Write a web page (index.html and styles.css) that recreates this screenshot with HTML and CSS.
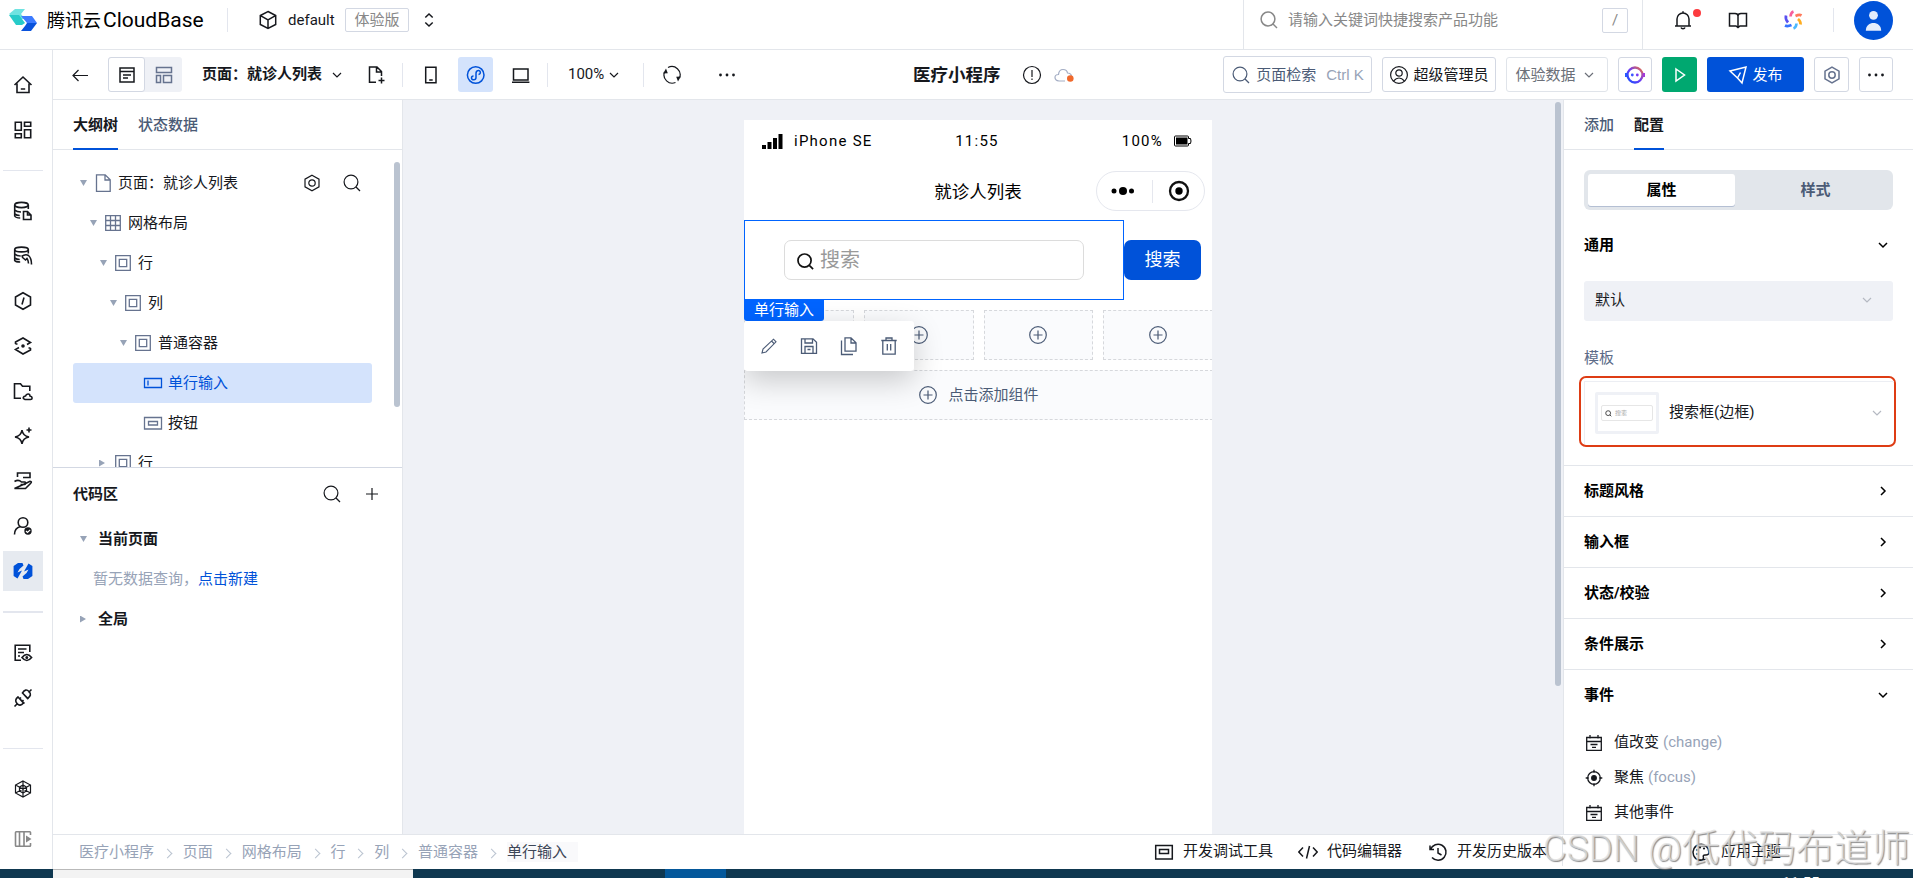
FILE: index.html
```html
<!DOCTYPE html>
<html lang="zh-CN">
<head>
  <meta charset="UTF-8">
  <meta name="viewport" content="width=device-width, initial-scale=1">
  <title>腾讯云CloudBase - 医疗小程序</title>
  <link rel="stylesheet" href="styles.css">
</head>
<body>
<!-- shared icons -->
<svg class="sprite" width="0" height="0">
  <symbol id="i-search" viewBox="0 0 20 20"><circle cx="9" cy="9" r="6.9"/><path d="M14 14l4 4"/></symbol>
  <symbol id="i-down" viewBox="0 0 20 20"><path d="M6 8l4 4 4-4"/></symbol>
  <symbol id="i-right" viewBox="0 0 20 20"><path d="M8 6l4 4-4 4"/></symbol>
  <symbol id="i-gear" viewBox="0 0 20 20"><path d="M10 2.200l7 4v7.600l-7 4-7-4V6.200z"/><circle cx="10" cy="10" r="3.200"/></symbol>
  <symbol id="i-dots" viewBox="0 0 20 20"><g fill="currentColor" stroke="none"><circle cx="3.500" cy="10" r="1.400"/><circle cx="10" cy="10" r="1.400"/><circle cx="16.500" cy="10" r="1.400"/></g></symbol>
  <symbol id="i-box" viewBox="0 0 20 20"><path d="M2.700 2.700h14.600v14.600H2.700zM6.300 6.300h7.400v7.400H6.300z"/></symbol>
  <symbol id="i-plus-circle" viewBox="0 0 20 20"><circle cx="10" cy="10" r="8.300"/><path d="M10 5.500v9M5.500 10h9"/></symbol>
  <symbol id="i-calendar" viewBox="0 0 20 20"><path d="M2.700 4.500h14.600v12.800H2.700zM3 8.500h14M6 2v3.500M14 2v3.500M6.500 11.500h7M8 14.300h4"/></symbol>
</svg>

<header class="header">
  <svg class="logo" viewBox="0 0 28 22"><path d="M6 0h10l-4 5 4 5H6L0 5z" fill="#6fe3e1"/><path d="M0 6h10l6 8-3 2H7z" fill="#27cbc9"/><path d="M12 7h11l5 7H18z" fill="#3d7bff"/><path d="M18 14h10l-6 8H12l4-5z" fill="#0a53dc"/></svg>
  <span class="brand">腾讯云<b>CloudBase</b></span>
  <i class="vline header-line"></i>
  <svg class="icon env-icon" viewBox="0 0 20 20"><path d="M10 1.500l7.700 4v9L10 18.500l-7.700-4v-9zM2.500 5.700L10 10l7.500-4.300M10 10v8.300"/></svg>
  <span class="env-name">default</span>
  <span class="env-tag">体验版</span>
  <svg class="icon env-arrow" viewBox="0 0 20 20"><path d="M6.300 7.500L10 4l3.700 3.500M6.300 12.500L10 16l3.700-3.500"/></svg>
  <div class="header-search">
    <svg class="icon"><use href="#i-search"/></svg>
    <span class="header-placeholder">请输入关键词快捷搜索产品功能</span>
    <kbd>/</kbd>
  </div>
  <div class="header-tools">
    <span class="bell"><svg class="icon" viewBox="0 0 20 20"><path d="M2 16h16M4 16V9a6 6 0 0 1 12 0v7M10 1.200V3M8 17.500c.6 1.700 3.400 1.700 4 0"/></svg><i class="red-dot"></i></span>
    <svg class="icon" viewBox="0 0 20 20"><path d="M10 5v12.500M1.500 3.500H7q3 0 3 2.500 0-2.500 3-2.500h5.500V16H12l-2 1.500L8 16H1.500z"/></svg>
    <svg class="icon" viewBox="0 0 20 20"><g fill="none" stroke-width="2.700"><path d="M7.500 6.500q.3-4 3-5" stroke="#f65f9c"/><path d="M12.500 6q4-1.800 6-.5" stroke="#ff7a5c"/><path d="M15 9q3 2.500 2.500 5.500" stroke="#ffad1f"/><path d="M13.500 13.500q-.3 4-3 5" stroke="#4cb9ff"/><path d="M8.500 15q-4 1.800-6.500.5" stroke="#3673ff"/><path d="M5 12.500Q2 9 3 5.500" stroke="#5a50f0"/></g></svg>
    <i class="vline"></i>
    <svg class="avatar" viewBox="0 0 38 38"><circle cx="19" cy="19" r="19" fill="#0052d9"/><circle cx="19" cy="14" r="4.300" fill="#e4edfc"/><path d="M11.500 29c0-10 15-10 15 0z" fill="#e4edfc"/></svg>
  </div>
</header>

<div class="main">
  <nav class="rail">
    <a class="rail-item"><svg class="icon" viewBox="0 0 20 20"><path d="M1.500 10L10 2l8.500 8M4 8.500v9h12v-9M7.800 14h4.400"/></svg></a>
    <a class="rail-item"><svg class="icon" viewBox="0 0 20 20"><path d="M2.300 2.300h6v8h-6zM11.500 2.300h6.200v4h-6.200zM2.300 13.700h6v4h-6zM11.500 9.700h6.200v8h-6.200z"/></svg></a>
    <i class="hline"></i>
    <a class="rail-item"><svg class="icon" viewBox="0 0 20 20"><ellipse cx="8.500" cy="4" rx="6.800" ry="2.600"/><path d="M1.700 4v11q1 2 5.500 2M15.300 4v4M1.700 9q2 2 6.300 2M1.700 13q2 1.500 5 1.500M10.500 10.500h4l3.500 3.500v4.500h-7.500zM14.500 10.500V14H18"/></svg></a>
    <a class="rail-item"><svg class="icon" viewBox="0 0 20 20"><ellipse cx="8.500" cy="3.500" rx="6.800" ry="2.400"/><path d="M1.700 3.500v11q1 1.500 5.500 1.500M15.300 3.500v4M1.700 8q2 2 6 2M1.700 12q2 1.500 5 1.500M8.500 10.500q4-3 7-1 3 2.500 3 9M9 11l3.500 3 1.500-1.500q1.500 2 1.500 5"/></svg></a>
    <a class="rail-item"><svg class="icon" viewBox="0 0 20 20"><path d="M10 1.700l7.500 4.300v8L10 18.300 2.500 14V6zM11 6.500l-2 7"/></svg></a>
    <a class="rail-item"><svg class="icon" viewBox="0 0 20 20"><path d="M2.500 8V6L10 2l7.500 4.500-3.500 2M17.500 12v2L10 18l-7.500-4.500 3.500-2M2.500 8h2M17.500 12h-2"/><circle cx="10" cy="10" r="1" fill="currentColor"/></svg></a>
    <a class="rail-item"><svg class="icon" viewBox="0 0 20 20"><path d="M8 17.300H1.500V2.700h6l2 2.500h7.300V10M12 18.500c-3-1-1.500-3.500.5-3.500 1-3 4.500-2.500 4.500 0 3 .5 2.500 3.500.5 3.500z"/></svg></a>
    <a class="rail-item"><svg class="icon" viewBox="0 0 20 20"><path d="M9 4q.8 6 7 7-6.200 1-7 7-.8-6-7-7 6.200-1 7-7zM16 1.500v5M13.500 4h5"/></svg></a>
    <a class="rail-item"><svg class="icon" viewBox="0 0 20 20"><path d="M4.500 6V2h12.500v4.500H10M1.500 10.500q4-2.500 7 .5H12q1.500 2-.5 2.500H7.500M12.500 12.500l4.500-2.300q2.500.3.500 2.300l-5 5H1.500z"/></svg></a>
    <a class="rail-item"><svg class="icon" viewBox="0 0 20 20"><circle cx="10" cy="6.500" r="4.800"/><path d="M7.500 10.500Q1.500 12 1.500 18.500"/><circle cx="15" cy="15" r="3.700" fill="currentColor" stroke="none"/><path d="M13 15l1.500 1.500 2.700-2.700" stroke="#fff" stroke-width="1.200"/></svg></a>
    <a class="rail-item rail-active"><svg class="icon" viewBox="0 0 20 20"><g fill="currentColor" stroke="none"><path d="M.6 5L5 2h4.500l1 2.500L6.500 8l-2 3.500L9 9.500 4.500 17.500.6 15z"/><path d="M19.400 15L15 18h-4.500l-1-2.500 4-3.500 2-3.500-4.500 2L15.500 2.500 19.400 5z"/></g></svg></a>
    <i class="hline hline-bold"></i>
    <a class="rail-item"><svg class="icon" viewBox="0 0 20 20"><path d="M8 17.300H2.200V2.200h14.600V9M5 6h8.500M5 9.500h6M5 13h2M9 14.500q4.800-6 9.600 0-4.800 6-9.600 0z"/><circle cx="13.800" cy="14.500" r=".7"/></svg></a>
    <a class="rail-item"><svg class="icon" viewBox="0 0 20 20"><path d="M1.500 18.500l3-3M15.500 4.500l3-3M5 9q-4 3-1 6.500t6.500-.5zM4.500 8.500l7 7M9.500 5q3-5 6.500-1.500t-1.500 7zM9 4.500l6.500 6.500M8 9.500l-1.500 1.500M10.500 12L9 13.500"/></svg></a>
    <i class="hline hline-low"></i>
    <a class="rail-item"><svg class="icon web" viewBox="0 0 20 20"><path d="M10 2l7.500 4v8L10 18l-7.500-4V6zM6.500 8l3.500-2 3.500 2v4L10 14l-3.500-2zM10 2v16M2.500 6l15 8M17.500 6l-15 8"/></svg></a>
    <a class="rail-item rail-fold"><svg class="icon" viewBox="0 0 20 20"><path d="M17.500 6V3.500q0-.7-.7-.7H3.200q-.7 0-.7.7v13q0 .7.700.7h13.600q.7 0 .7-.7V14M6.500 3v14M11 3v14"/><path d="M13 6.500l5.500 3.500-5.500 3.500z" fill="currentColor" stroke="none"/></svg></a>
  </nav>

  <div class="editor">
    <div class="toolbar">
      <div class="tools-left">
        <svg class="icon thin" viewBox="0 0 20 20"><path d="M18 10.500H3M8.500 5L3 10.500 8.500 16"/></svg>
        <div class="view-switch">
          <span class="view-on"><svg class="icon" viewBox="0 0 20 20"><path d="M3 3h14v14H3zM3 6.500h14M6 10h8M6 13h5"/></svg></span>
          <span class="view-off"><svg class="icon" viewBox="0 0 20 20"><path d="M2.500 2.500h15v5h-15zM2.500 10.500h4v7h-4zM9.500 10.500h8v7h-8z"/></svg></span>
        </div>
        <strong class="page-name">页面：就诊人列表</strong>
        <svg class="icon thin page-arrow"><use href="#i-down"/></svg>
        <svg class="icon new-page" viewBox="0 0 20 20"><path d="M9 17.300H2.500V2H10l4.500 4.500V11M9.500 2v5h5M14.500 12.500v6M11.500 15.500h6"/></svg>
        <i class="vline line-a"></i>
        <span class="device"><svg class="icon" viewBox="0 0 20 20"><path d="M4.700 2.300h10.300v15.500H4.700zM8.200 15h3.500"/></svg></span>
        <span class="device device-on"><svg class="icon" viewBox="0 0 20 20"><circle cx="9.700" cy="10" r="8.300"/><path d="M12.500 9.500c3-.5 2-4.500-.5-4-2 .3-2 1.500-2 3v4c0 3-4.500 3-4.500.5 0-1.500 1-2 2-2"/></svg></span>
        <span class="device"><svg class="icon" viewBox="0 0 20 20"><path d="M2.500 4H17v11H2.500zM1 17.300h17.400"/></svg></span>
        <i class="vline line-b"></i>
        <span class="zoom">100%</span>
        <svg class="icon thin"><use href="#i-down"/></svg>
        <i class="vline line-c"></i>
        <svg class="icon thin refresh" viewBox="0 0 20 20"><path d="M6 2.500A8.300 8.300 0 0 1 17.500 13M13.500 17.500A8.300 8.300 0 0 1 2.500 7"/><path d="M1.200 8.500L4 3.500l1.800 4.800zM18.800 11.500L16 16.500l-1.800-4.800z" fill="currentColor" stroke="none"/></svg>
        <svg class="icon more"><use href="#i-dots"/></svg>
      </div>
      <strong class="app-name">医疗小程序</strong>
      <svg class="icon thin app-info" viewBox="0 0 20 20"><circle cx="10" cy="10" r="8.500"/><path d="M10 5v7M10 13.500v1.500"/></svg>
      <svg class="icon thin app-cloud" viewBox="0 0 20 20"><path d="M11 16H5q-4-.5-4-3.500T4.500 9.500Q5 4.500 9 4.500T13.500 8q3.500 0 4 3" stroke="#a3adc4"/><circle cx="16.300" cy="13.500" r="3.300" fill="#f0692c" stroke="none"/></svg>
      <div class="tools-right">
        <span class="btn btn-search"><svg class="icon thin"><use href="#i-search"/></svg>页面检索<em>Ctrl K</em></span>
        <span class="btn btn-role"><svg class="icon thin" viewBox="0 0 20 20"><circle cx="10" cy="10" r="8.400"/><circle cx="10" cy="8" r="3.200"/><path d="M4.500 16q5.500-6 11 0"/></svg>超级管理员</span>
        <span class="btn btn-data">体验数据<svg class="icon thin"><use href="#i-down"/></svg></span>
        <span class="btn btn-ai"><svg class="icon" viewBox="0 0 20 20"><defs><linearGradient id="ai" x1="0" y1="1" x2="1" y2="0"><stop offset="0" stop-color="#1650ff"/><stop offset=".5" stop-color="#6b3bf5"/><stop offset="1" stop-color="#f0703c"/></linearGradient></defs><circle cx="10" cy="10" r="7.500" stroke="url(#ai)" stroke-width="2.300"/><path d="M1.200 8v4" stroke="#2859ff" stroke-width="2.500"/><path d="M18.800 8v4" stroke="#a23bdc" stroke-width="2.500"/><circle cx="7.300" cy="10" r="1.400" fill="#3b55ff" stroke="none"/><circle cx="12.300" cy="10" r="1.400" fill="#7a3bf5" stroke="none"/></svg></span>
        <span class="btn btn-run"><svg class="icon" viewBox="0 0 20 20"><path d="M6 4l8.500 6L6 16z"/></svg></span>
        <span class="btn btn-publish"><svg class="icon" viewBox="0 0 20 20"><path d="M2 6l16-4-4 16-4.500-5zM9.500 13l3-5.500M9.500 13L2 6"/></svg>发布</span>
        <span class="btn btn-gear"><svg class="icon"><use href="#i-gear"/></svg></span>
        <span class="btn btn-more"><svg class="icon"><use href="#i-dots"/></svg></span>
      </div>
    </div>

    <div class="workspace">
      <aside class="left-panel">
        <div class="tabs"><span class="tab tab-on">大纲树</span><span class="tab">状态数据</span></div>
        <div class="tree">
          <i class="scrollbar tree-scroll"></i>
          <div class="node lv0"><i class="caret"></i><svg class="icon" viewBox="0 0 20 20"><path d="M3.500 1.800h8.700l5 5v11.500H3.500zM12 2v5h5"/></svg><span>页面：就诊人列表</span>
            <div class="node-tools"><svg class="icon"><use href="#i-gear"/></svg><svg class="icon"><use href="#i-search"/></svg></div></div>
          <div class="node lv1"><i class="caret"></i><svg class="icon" viewBox="0 0 20 20"><path d="M2.700 2.700h14.600v14.600H2.700zM7.500 2.700v14.600M12.500 2.700v14.600M2.700 7.500h14.600M2.700 12.500h14.600"/></svg><span>网格布局</span></div>
          <div class="node lv2"><i class="caret"></i><svg class="icon"><use href="#i-box"/></svg><span>行</span></div>
          <div class="node lv3"><i class="caret"></i><svg class="icon"><use href="#i-box"/></svg><span>列</span></div>
          <div class="node lv4"><i class="caret"></i><svg class="icon"><use href="#i-box"/></svg><span>普通容器</span></div>
          <div class="node lv5 node-on"><svg class="icon" viewBox="0 0 20 20"><path d="M1.500 5.500h17v9h-17zM5 7.500v5"/></svg><span>单行输入</span></div>
          <div class="node lv5"><svg class="icon" viewBox="0 0 20 20"><path d="M1.500 4.500h17v11.500h-17zM5.500 8.500h9v3.500h-9z"/></svg><span>按钮</span></div>
          <div class="node lv2"><i class="caret caret-right"></i><svg class="icon"><use href="#i-box"/></svg><span>行</span></div>
        </div>
        <div class="code-area">
          <div class="code-head"><strong>代码区</strong><svg class="icon thin"><use href="#i-search"/></svg><svg class="icon thin" viewBox="0 0 20 20"><path d="M10 4v12M4 10h12"/></svg></div>
          <div class="code-row"><i class="caret"></i><strong>当前页面</strong></div>
          <div class="code-empty">暂无数据查询，<a>点击新建</a></div>
          <div class="code-row code-global"><i class="caret caret-right"></i><strong>全局</strong></div>
        </div>
      </aside>

      <section class="canvas">
        <i class="scrollbar canvas-scroll"></i>
        <div class="phone">
          <div class="status">
            <span class="carrier"><svg width="21" height="15" viewBox="0 0 21 15"><path d="M0 11h4v4H0zM5.500 8h4v7h-4zM11 4h4v11h-4zM16.500 0h4v15h-4z"/></svg>iPhone SE</span>
            <span class="time">11:55</span>
            <span class="power">100%<svg width="18" height="12" viewBox="0 0 18 12"><path d="M1.500 1h12q1 0 1 1v1.500h2q1 2.500 0 5h-2V10q0 1-1 1h-12q-1 0-1-1V2q0-1 1-1z" fill="none" stroke="#000"/><path d="M2 2.500h11.500v7H2z"/></svg></span>
          </div>
          <div class="navbar">就诊人列表
            <div class="capsule">
              <svg width="24" height="12" viewBox="0 0 24 12"><circle cx="3" cy="6" r="2.500"/><circle cx="12" cy="6" r="4"/><circle cx="20.500" cy="6" r="2.500"/></svg>
              <i></i>
              <svg width="22" height="22" viewBox="0 0 22 22"><circle cx="11" cy="11" r="9" fill="none" stroke="#111" stroke-width="2.300"/><circle cx="11" cy="11" r="3.700"/></svg>
            </div>
          </div>
          <div class="search-row">
            <div class="selected">
              <div class="field"><svg class="icon"><use href="#i-search"/></svg>搜索</div>
              <div class="select-tip">
                <span class="select-name">单行输入</span>
                <div class="select-tools">
                  <svg class="icon pencil" viewBox="0 0 20 20"><path d="M3 17l1-4L14.500 3.200 17 5.800 7 16zM12.500 5l2.500 2.500"/></svg>
                  <svg class="icon" viewBox="0 0 20 20"><path d="M2.500 2.800H14l3.500 3.500v11h-15zM6 3v4h7.500V3M6 17v-6.500h8V17M8.500 13.500h3"/></svg>
                  <svg class="icon" viewBox="0 0 20 20"><path d="M6 1.800h6l5 5v8.400H6zM12 2v5h5M2.500 4.500v14H14"/></svg>
                  <svg class="icon" viewBox="0 0 20 20"><path d="M3.800 5v13.200h12.400V5M2.300 4.500h15.400M7 4.500V2h6v2.500M8.300 8v6.500M11.700 8v6.500"/></svg>
                </div>
              </div>
            </div>
            <span class="search-btn">搜索</span>
          </div>
          <div class="slots">
            <div class="slot"></div>
            <div class="slot"><svg class="icon thin"><use href="#i-plus-circle"/></svg></div>
            <div class="slot"><svg class="icon thin"><use href="#i-plus-circle"/></svg></div>
            <div class="slot"><svg class="icon thin"><use href="#i-plus-circle"/></svg></div>
          </div>
          <div class="slot slot-wide"><svg class="icon thin"><use href="#i-plus-circle"/></svg>点击添加组件</div>
        </div>
      </section>

      <aside class="right-panel">
        <div class="tabs"><span class="tab">添加</span><span class="tab tab-on">配置</span></div>
        <div class="segment"><span class="seg seg-on">属性</span><span class="seg">样式</span></div>
        <div class="group-title"><strong>通用</strong><svg class="icon"><use href="#i-down"/></svg></div>
        <div class="select-default">默认<svg class="icon thin"><use href="#i-down"/></svg></div>
        <div class="field-label">模板</div>
        <div class="template-mark">
          <div class="template">
            <div class="thumb"><div class="thumb-input"><svg class="icon"><use href="#i-search"/></svg>搜索</div></div>
            <span>搜索框(边框)</span>
            <svg class="icon thin"><use href="#i-down"/></svg>
          </div>
        </div>
        <div class="group"><strong>标题风格</strong><svg class="icon"><use href="#i-right"/></svg></div>
        <div class="group"><strong>输入框</strong><svg class="icon"><use href="#i-right"/></svg></div>
        <div class="group"><strong>状态/校验</strong><svg class="icon"><use href="#i-right"/></svg></div>
        <div class="group"><strong>条件展示</strong><svg class="icon"><use href="#i-right"/></svg></div>
        <div class="group"><strong>事件</strong><svg class="icon"><use href="#i-down"/></svg></div>
        <ul class="events">
          <li><svg class="icon"><use href="#i-calendar"/></svg>值改变 <em>(change)</em></li>
          <li><svg class="icon" viewBox="0 0 20 20"><circle cx="10" cy="10" r="6.300"/><circle cx="10" cy="10" r="2.300" fill="currentColor"/><path d="M10 1.700v3M10 15.300v3M1.700 10h3M15.300 10h3"/></svg>聚焦 <em>(focus)</em></li>
          <li><svg class="icon"><use href="#i-calendar"/></svg>其他事件</li>
        </ul>
      </aside>
    </div>

    <footer class="footer">
      <div class="crumbs">
        <span>医疗小程序</span><i></i><span>页面</span><i></i><span>网格布局</span><i></i><span>行</span><i></i><span>列</span><i></i><span>普通容器</span><i></i><span class="crumb-on">单行输入</span>
      </div>
      <div class="dev-tools">
        <span class="dev"><svg class="icon" viewBox="0 0 20 20"><path d="M1.700 3.500h16.600v13.500H1.700zM5.500 7.500h9v4h-9z"/></svg>开发调试工具</span>
        <span class="dev dev-code"><svg class="icon" viewBox="0 0 20 20"><path d="M5 5.500L.8 10 5 14.500M15 5.500l4.200 4.500-4.200 4.500M11.500 4l-3 12.500"/></svg>代码编辑器</span>
        <span class="dev dev-history"><svg class="icon" viewBox="0 0 20 20"><path d="M2 3.500v4h4M2.500 7.500A8 8 0 1 1 4 15.500M10 6v5l3.500 2"/></svg>开发历史版本</span>
      </div>
      <div class="theme">
        <svg class="icon" viewBox="0 0 20 20"><path d="M14.500 17A8 8 0 1 1 18 10.500q-.5 3-4 2.500-2.500 0-1.500 2.500 0 3-4 2.300"/><g fill="currentColor" stroke="none"><circle cx="6" cy="8" r="1.100"/><circle cx="9" cy="5.500" r="1.100"/><circle cx="13" cy="6.500" r="1.100"/><circle cx="6" cy="12" r="1.100"/></g></svg>应用主题
      </div>
      <div class="watermark">CSDN @<span>低代码布道师</span></div>
    </footer>
  </div>
</div>

<div class="taskbar"><i class="task-search"></i><i class="task-app"></i><span>11:55</span></div>
</body>
</html>
```
FILE: styles.css
```css
* {
  box-sizing: border-box;
}

body {
  margin: 0;
  width: 1913px;
  height: 878px;
  overflow: hidden;
  display: flex;
  flex-direction: column;
  background: #fff;
  color: #16181d;
  font: 15px/20px Roboto, "Noto Sans CJK SC", sans-serif;
  white-space: nowrap;
}

i,
em {
  font-style: normal;
}

strong {
  font-weight: 700;
}

.sprite {
  position: absolute;
}

.icon {
  width: 20px;
  height: 20px;
  flex: none;
  display: block;
  fill: none;
  stroke: currentColor;
  stroke-width: 1.5;
}

.thin {
  stroke-width: 1.2;
}

.vline {
  width: 1px;
  height: 24px;
  flex: none;
  background: #e3e6ee;
}

/* header */
.header {
  height: 50px;
  flex: none;
  display: flex;
  align-items: center;
  padding: 0 20px 9px 9px;
  border-bottom: 1px solid #e3e6eb;
}

.logo {
  width: 28px;
  height: 22px;
}

.brand {
  width: 180px;
  margin-left: 10px;
  font-size: 18px;
  color: #000;
}

.brand b {
  margin-left: 2px;
  font-size: 21px;
  font-weight: 400;
}

.env-icon {
  margin-left: 30px;
}

.env-name {
  width: 47px;
  margin-left: 10px;
}

.env-tag {
  width: 64px;
  height: 24px;
  margin-left: 10px;
  border: 1px solid #d3d8e3;
  border-radius: 2px;
  color: #888;
  text-align: center;
  line-height: 22px;
}

.env-arrow {
  margin-left: 10px;
}

.header-search {
  width: 400px;
  height: 49px;
  margin-left: auto;
  margin-bottom: -9px;
  padding: 0 14px 9px 15px;
  display: flex;
  align-items: center;
  border-left: 1px solid #e3e6eb;
  border-right: 1px solid #e3e6eb;
  color: #888;
}

.header-placeholder {
  margin-left: 9px;
}

.header-search kbd {
  width: 26px;
  height: 25px;
  margin-left: auto;
  border: 1px solid #d3d8e3;
  border-radius: 2px;
  font: 15px/22px Roboto, sans-serif;
  text-align: center;
}

.header-tools {
  width: 250px;
  padding-left: 30px;
  display: flex;
  align-items: center;
}

.header-tools .icon {
  margin-right: 35px;
}

.header-tools .vline {
  margin: 0 20px 0 -5px;
}

.bell {
  position: relative;
}

.red-dot {
  position: absolute;
  top: -1px;
  right: 27px;
  width: 8px;
  height: 8px;
  border-radius: 50%;
  background: #fc3b3f;
}

.avatar {
  width: 39px;
  height: 39px;
  flex: none;
}

/* left rail */
.main {
  flex: 1;
  min-height: 0;
  display: flex;
}

.rail {
  width: 53px;
  flex: none;
  padding: 12px 9px 0 3px;
  border-right: 1px solid #e3e6eb;
  display: flex;
  flex-direction: column;
}

.rail-item {
  height: 45px;
  flex: none;
  display: flex;
  align-items: center;
  justify-content: center;
  color: #16181d;
}

.rail-item .icon {
  stroke-width: 1.6;
}

.rail-item .web {
  stroke-width: 1.2;
}

.rail-active {
  height: 40px;
  margin: 3px 0 2px;
  background: #e6eaf0;
  color: #0052d9;
}

.rail-fold {
  margin-top: 5px;
  color: #888;
}

.hline {
  height: 1px;
  flex: none;
  margin: 18px 0 17px;
  background: #e3e6ee;
}

.hline-bold {
  height: 2px;
}

.hline-low {
  margin-top: 28px;
}

/* toolbar */
.editor {
  flex: 1;
  min-width: 0;
  display: flex;
  flex-direction: column;
}

.toolbar {
  height: 50px;
  flex: none;
  display: flex;
  align-items: center;
  padding-right: 20px;
  border-bottom: 1px solid #e3e6eb;
}

.tools-left {
  width: 860px;
  padding-left: 17px;
  display: flex;
  align-items: center;
}

.view-switch {
  width: 74px;
  height: 35px;
  margin-left: 18px;
  display: flex;
  border-radius: 3px;
  background: #eff1f6;
}

.view-switch span {
  width: 37px;
  display: flex;
  align-items: center;
  justify-content: center;
}

.view-switch .view-on {
  border: 1px solid #d3d8e3;
  border-radius: 3px;
  background: #fff;
}

.view-off {
  color: #66738f;
}

.page-name {
  width: 120px;
  margin: -1px 0 0 20px;
}

.page-arrow {
  margin-left: 5px;
}

.new-page {
  margin-left: 20px;
}

.line-a {
  margin: 0 0 0 15px;
}

.device {
  width: 35px;
  height: 35px;
  margin-left: 10px;
  border-radius: 3px;
  display: flex;
  align-items: center;
  justify-content: center;
}

.device-on {
  background: #d4e3fc;
  color: #0052d9;
}

.line-b {
  margin: 0 20px 0 9px;
}

.zoom {
  width: 36px;
  margin-top: -2px;
}

.line-c {
  margin: 0 18px 0 19px;
}

.more {
  margin-left: 35px;
}

.app-name {
  width: 89px;
  font-size: 17.5px;
}

.app-info {
  margin-left: 20px;
}

.app-cloud {
  margin-left: 12px;
}

.tools-right {
  margin-left: auto;
  display: flex;
  align-items: center;
  gap: 10px;
}

.btn {
  height: 35px;
  display: flex;
  align-items: center;
  justify-content: center;
  border: 1px solid #d3d8e3;
  border-radius: 3px;
}

.btn-search {
  width: 149px;
  height: 37px;
  gap: 5px;
  color: #4b5b76;
}

.btn-search em {
  margin-left: 5px;
  color: #97a3b7;
  font-family: "Liberation Sans", sans-serif;
}

.btn-role {
  width: 114px;
  gap: 4px;
}

.btn-data {
  width: 102px;
  gap: 3px;
  color: #6b6f78;
  border-color: #e0e4ea;
}

.btn-ai,
.btn-more {
  width: 34px;
}

.btn-gear {
  width: 35px;
  color: #66738f;
}

.btn-run {
  width: 35px;
  border: 0;
  background: #00a870;
  color: #fff;
}

.btn-publish {
  width: 97px;
  gap: 4px;
  border: 0;
  background: #0052d9;
  color: #fff;
}

/* left panel */
.workspace {
  flex: 1;
  min-height: 0;
  display: flex;
}

.left-panel {
  width: 350px;
  flex: none;
  border-right: 1px solid #e3e6eb;
}

.tabs {
  height: 50px;
  display: flex;
  gap: 20px;
  padding-left: 20px;
  border-bottom: 1px solid #e3e6eb;
}

.tab {
  height: 50px;
  line-height: 51px;
  color: #4b5b76;
  font-weight: 500;
}

.tab-on {
  border-bottom: 2px solid #0052d9;
  color: #16181d;
  font-weight: 700;
}

.tree {
  position: relative;
  height: 317px;
  padding: 13px 30px 0 20px;
  overflow: hidden;
}

.scrollbar {
  position: absolute;
  width: 6px;
  border-radius: 3px;
  background: #bac3d0;
}

.tree-scroll {
  top: 12px;
  right: 2px;
  height: 245px;
}

.node {
  height: 40px;
  display: flex;
  align-items: center;
  border-radius: 3px;
}

.node .icon {
  margin-left: 6px;
  color: #66738f;
  stroke-width: 1.3;
}

.node span {
  margin: 0 0 0 5px;
}

.caret {
  width: 7px;
  height: 6px;
  flex: none;
  background: #97a3b7;
  clip-path: polygon(0 0, 100% 0, 50% 100%);
}

.caret-right {
  width: 6px;
  height: 7px;
  margin-right: 1px;
  clip-path: polygon(0 0, 100% 50%, 0 100%);
}

.lv0 { padding-left: 7px; }
.lv1 { padding-left: 17px; }
.lv2 { padding-left: 27px; }
.lv3 { padding-left: 37px; }
.lv4 { padding-left: 47px; }
.lv5 { padding-left: 64px; }

.lv2 .caret-right {
  margin: 0 2px 0 -1px;
}

.node-on {
  background: #d4e3fc;
}

.node-on,
.node-on .icon {
  color: #0052d9;
}

.node-tools {
  display: flex;
  gap: 20px;
  margin: 0 10px 0 auto;
}

.node-tools .icon {
  margin: 0;
  color: #16181d;
  stroke-width: 1.2;
}

.code-area {
  padding: 6px 20px 0 20px;
  border-top: 1px solid #d3d8e3;
}

.code-head {
  height: 40px;
  display: flex;
  align-items: center;
  gap: 20px;
}

.code-head strong {
  margin-right: auto;
}

.code-row {
  height: 40px;
  margin-top: 5px;
  padding-left: 7px;
  display: flex;
  align-items: center;
  gap: 11px;
}

.code-empty {
  padding-left: 20px;
  line-height: 40px;
  color: #97a3b7;
}

.code-empty a {
  color: #0052d9;
}

.code-global {
  margin-top: 0;
}

/* canvas */
.canvas {
  position: relative;
  width: 1160px;
  flex: none;
  padding: 20px 0 0 341px;
  background: #eff1f6;
}

.canvas-scroll {
  top: 2px;
  right: 2px;
  height: 584px;
}

.phone {
  width: 468px;
  height: 100%;
  overflow: hidden;
  background: #fff;
}

.status {
  height: 42px;
  padding: 0 20px 0 18px;
  display: grid;
  grid-template-columns: 1fr auto 1fr;
  align-items: center;
  color: #000;
  letter-spacing: 1.25px;
}

.carrier,
.power {
  display: flex;
  align-items: center;
  gap: 11px;
}

.power {
  justify-content: flex-end;
}

.navbar {
  position: relative;
  height: 58px;
  line-height: 60px;
  text-align: center;
  font-size: 17.5px;
  color: #000;
}

.capsule {
  position: absolute;
  top: 9px;
  right: 7px;
  width: 109px;
  height: 40px;
  padding: 0 14px;
  display: flex;
  align-items: center;
  justify-content: space-between;
  border: 1px solid #e5e7ee;
  border-radius: 20px;
}

.capsule i {
  width: 1px;
  height: 23px;
  margin-left: 2px;
  background: #e5e7ee;
}

.search-row {
  display: flex;
  align-items: center;
}

.selected {
  position: relative;
  width: 380px;
  height: 80px;
  padding: 19px 39px;
  border: 1px solid #0064ff;
}

.field {
  height: 40px;
  padding-left: 11px;
  display: flex;
  align-items: center;
  gap: 5px;
  border: 1px solid #dcdcdc;
  border-radius: 7px;
  color: #999;
  font-size: 20px;
}

.field .icon {
  width: 19px;
  height: 19px;
  margin-top: 2px;
  color: #111;
  stroke-width: 1.8;
}

.search-btn {
  width: 77px;
  height: 40px;
  border-radius: 7px;
  background: #0052d9;
  color: #fff;
  font-size: 18px;
  line-height: 40px;
  text-align: center;
}

.select-tip {
  position: absolute;
  z-index: 2;
  top: 78px;
  left: -1px;
}

.select-name {
  display: block;
  width: 80px;
  height: 22px;
  border-radius: 0 0 3px 3px;
  background: #0064ff;
  color: #fff;
  line-height: 22px;
  text-align: center;
}

.select-tools {
  width: 170px;
  height: 50px;
  padding: 0 15px;
  display: flex;
  align-items: center;
  gap: 20px;
  border-radius: 3px;
  background: #fff;
  box-shadow: 0 10px 30px rgba(0, 0, 0, 0.2);
  color: #4b5b76;
}

.select-tools .icon {
  stroke-width: 1.3;
}

.select-tools .pencil {
  stroke-width: 1.1;
}

.slots {
  width: 469px;
  margin: 10px 0;
  display: grid;
  grid-template-columns: repeat(4, 1fr);
  gap: 10px;
}

.slot {
  height: 50px;
  display: flex;
  align-items: center;
  justify-content: center;
  gap: 10px;
  border: 1px dashed #d6d8dc;
  background: #fafbfd;
  color: #4b5b76;
}

.slot-wide {
  width: 469px;
}

/* right panel */
.right-panel {
  flex: 1;
  min-width: 0;
  border-left: 1px solid #e3e6eb;
}

.segment {
  height: 40px;
  margin: 20px 20px 0;
  padding: 4px;
  display: flex;
  border-radius: 6px;
  background: #e2e6eb;
}

.seg {
  flex: 1;
  padding-left: 7px;
  color: #4b5b76;
  font-weight: 700;
  line-height: 32px;
  text-align: center;
}

.seg-on {
  flex: 0 0 147px;
  padding-left: 0;
  border-radius: 3px;
  background: #fff;
  box-shadow: 0 1px 0 #b4bfd3;
  color: #000;
}

.group-title,
.group {
  padding: 0 20px;
  display: flex;
  align-items: center;
  justify-content: space-between;
  color: #000;
}

.group-title {
  height: 70px;
}

.select-default {
  height: 40px;
  margin: 1px 20px 0;
  padding: 0 16px 2px 11px;
  display: flex;
  align-items: center;
  justify-content: space-between;
  border-radius: 3px;
  background: #eff1f6;
}

.select-default .icon,
.template .icon {
  color: #b5b9c2;
}

.field-label {
  height: 55px;
  padding: 27px 20px 0;
  color: #5c6b88;
}

.template-mark {
  width: 317px;
  height: 71px;
  margin: 0 0 18px 15px;
  padding: 3px 0 1px 3px;
  border: 2px solid #de3c14;
  border-radius: 7px;
}

.template {
  height: 63px;
  padding: 0 7px 0 10px;
  display: flex;
  align-items: center;
  border-left: 1px solid #eceef3;
  border-top: 1px solid #eceef3;
}

.template > span {
  margin: -2px auto 0 10px;
}

.thumb {
  width: 64px;
  height: 42px;
  padding: 10px 3px;
  border: 3px solid #eff1f6;
  border-radius: 2px;
}

.thumb-input {
  height: 16px;
  padding-left: 3px;
  display: flex;
  align-items: center;
  gap: 3px;
  border: 1px solid #e6e6e6;
  border-radius: 2px;
  color: #aaa;
  font-size: 6px;
}

.thumb .icon {
  width: 7px;
  height: 7px;
  color: #333;
  stroke-width: 2.5;
}

.group {
  height: 51px;
  border-top: 1px solid #e3e6eb;
}

.events {
  margin: 5px 0 0;
  padding: 0 20px;
  list-style: none;
}

.events li {
  height: 35px;
  padding-bottom: 2px;
  display: flex;
  align-items: center;
}

.events .icon {
  margin: 2px 10px 0 0;
  stroke-width: 1.3;
}

.events em {
  margin-left: 4px;
  color: #97a3b7;
}

/* footer */
.footer {
  position: relative;
  height: 35px;
  flex: none;
  display: flex;
  align-items: center;
  border-top: 1px solid #e3e6eb;
}

.crumbs {
  width: 1101px;
  padding: 0 0 1px 26px;
  display: flex;
  align-items: center;
  color: #97a3b7;
}

.crumbs i {
  width: 7px;
  height: 7px;
  margin: 3px 11.8px 0 10px;
  border: solid #bac3d0;
  border-width: 1.5px 1.5px 0 0;
  transform: rotate(45deg);
}

.crumb-on {
  padding-right: 11px;
  background: #f9f9fb;
  color: #3d4657;
}

.dev-tools {
  width: 409px;
  height: 30px;
  margin-top: -3px;
  display: flex;
  align-items: center;
  border-right: 1px solid #e3e6eb;
}

.dev {
  display: flex;
  align-items: center;
  gap: 9px;
}

.dev .icon,
.theme .icon {
  margin-top: 2px;
}

.dev-code {
  margin-left: 25px;
}

.dev-history {
  margin-left: 26px;
}

.theme {
  display: flex;
  align-items: center;
  gap: 10px;
  margin: -2px 0 0 128px;
}

.watermark {
  position: absolute;
  top: -10px;
  right: 3px;
  color: rgba(225, 225, 225, 0.75);
  font-size: 37px;
  font-weight: 300;
  line-height: 46px;
  text-shadow: 1px 1px 1px rgba(100, 100, 100, 0.75);
}

.watermark span {
  font-size: 38px;
}

/* desktop strip under the window */
.taskbar {
  height: 9px;
  flex: none;
  display: flex;
  overflow: hidden;
  padding-left: 53px;
  background: #0f3850;
}

.task-search {
  width: 360px;
  border-top: 1px solid #b9b9b9;
  background: #f3f3f3;
}

.task-app {
  width: 61px;
  margin-left: 252px;
  background: #04589b;
}

.taskbar span {
  margin: 4px 0 0 1056px;
  color: #fff;
}
```
